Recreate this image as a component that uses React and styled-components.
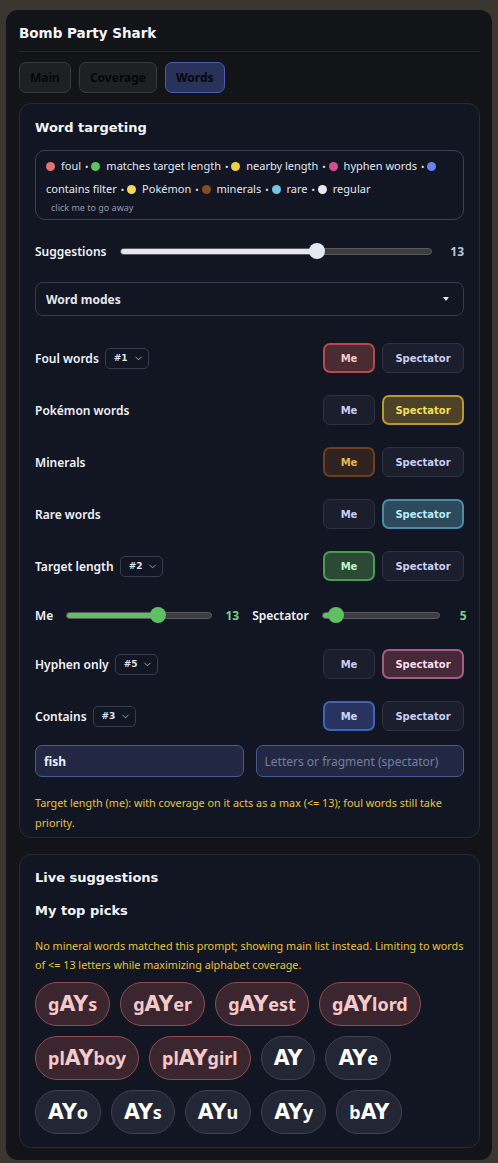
import React from 'react';
import styled, { createGlobalStyle } from 'styled-components';
import { ChevronDown } from 'lucide-react';

const GlobalStyle = createGlobalStyle`
    body {
        margin: 0;
        background: #3b362f;
        font-family: "Noto Sans", "Open Sans", sans-serif;
    }
`;

const HEAD = `"DejaVu Sans", Verdana, sans-serif`;

// Legend entries
const legend = [
    { color: '#e07272', label: 'foul' },
    { color: '#5ec162', label: 'matches target length' },
    { color: '#f0cf45', label: 'nearby length' },
    { color: '#d2508f', label: 'hyphen words' },
    { color: '#6283f0', label: 'contains filter' },
    { color: '#f3da5a', label: 'Pokémon' },
    { color: '#8a4a22', label: 'minerals' },
    { color: '#6ec6e8', label: 'rare' },
    { color: '#e6e9ef', label: 'regular' },
];

// Button tones
const tones = {
    idle: { bg: '#1b1f2d', border: '#2e3344', text: '#c9cdf2' },
    foul: { bg: '#4a2b31', border: '#b24c4a', text: '#f6c9c9' },
    poke: { bg: '#4b4228', border: '#b8982f', text: '#f7df5c' },
    mineral: { bg: '#2f231f', border: '#6d3f20', text: '#eab84c' },
    rare: { bg: '#2c4a5b', border: '#4c8aa8', text: '#bdebf5' },
    target: { bg: '#2b4a36', border: '#4d9a52', text: '#c3f1cb' },
    hyphen: { bg: '#462839', border: '#a35c82', text: '#f6dfea' },
    contains: { bg: '#273461', border: '#4262b2', text: '#cbd6fa' },
};

const modes = [
    { label: 'Foul words', rank: '#1', me: 'foul', spec: 'idle' },
    { label: 'Pokémon words', me: 'idle', spec: 'poke' },
    { label: 'Minerals', me: 'mineral', spec: 'idle' },
    { label: 'Rare words', me: 'idle', spec: 'rare' },
    { label: 'Target length', rank: '#2', me: 'target', spec: 'idle', sliders: true },
    { label: 'Hyphen only', rank: '#5', me: 'idle', spec: 'hyphen' },
    { label: 'Contains', rank: '#3', me: 'contains', spec: 'idle' },
];

const chips = [
    ['g', 'AY', 's', true], ['g', 'AY', 'er', true], ['g', 'AY', 'est', true], ['g', 'AY', 'lord', true],
    ['pl', 'AY', 'boy', true], ['pl', 'AY', 'girl', true], ['', 'AY', '', false], ['', 'AY', 'e', false],
    ['', 'AY', 'o', false], ['', 'AY', 's', false], ['', 'AY', 'u', false], ['', 'AY', 'y', false],
    ['b', 'AY', '', false],
];

const Slider = ({ value, min, max, fill, width }) => {
    const pct = ((value - min) / (max - min)) * 100;
    return (
        <Track style={{ width }}>
            <Fill $color={fill} style={{ width: `${pct}%` }} />
            <Thumb $color={fill} style={{ left: `${pct}%` }} />
        </Track>
    );
};

const App = () => {
    return (
        <>
            <GlobalStyle />
            <Panel>
                <Title>Bomb Party Shark</Title>
                <Divider />
                <Tabs>
                    <Tab>Main</Tab>
                    <Tab>Coverage</Tab>
                    <Tab $active>Words</Tab>
                </Tabs>

                <Card>
                    <CardTitle>Word targeting</CardTitle>
                    <Legend>
                        <LegendLine>
                            {legend.map((item, i) => (
                                <React.Fragment key={item.label}>
                                    <Dot $color={item.color} />
                                    <LegendLabel>{item.label}</LegendLabel>
                                    {i < legend.length - 1 && <Sep>•</Sep>}{' '}
                                </React.Fragment>
                            ))}
                        </LegendLine>
                        <Dismiss>click me to go away</Dismiss>
                    </Legend>

                    <SuggestRow>
                        <Label>Suggestions</Label>
                        <Slider value={13} min={1} max={20} fill="#e3e7f1" width={312} />
                        <Value>13</Value>
                    </SuggestRow>

                    <Select>
                        <span>Word modes</span>
                        <Caret />
                    </Select>

                    <Modes>
                        {modes.map((m) => (
                            <React.Fragment key={m.label}>
                                <ModeRow>
                                    <ModeLeft>
                                        <Label>{m.label}</Label>
                                        {m.rank && (
                                            <Rank>
                                                {m.rank}
                                                <ChevronDown size={11} strokeWidth={1.4} />
                                            </Rank>
                                        )}
                                    </ModeLeft>
                                    <ModeButtons>
                                        <ModeButton $tone={tones[m.me]} $w={52}>Me</ModeButton>
                                        <ModeButton $tone={tones[m.spec]} $w={82}>Spectator</ModeButton>
                                    </ModeButtons>
                                </ModeRow>
                                {m.sliders && (
                                    <LengthRow>
                                        <Label>Me</Label>
                                        <Slider value={13} min={1} max={20} fill="#5fbf63" width={146} />
                                        <GreenValue>13</GreenValue>
                                        <Label>Spectator</Label>
                                        <Slider value={5} min={3} max={20} fill="#5fbf63" width={118} />
                                        <GreenValue>5</GreenValue>
                                    </LengthRow>
                                )}
                            </React.Fragment>
                        ))}
                    </Modes>

                    <Inputs>
                        <Input defaultValue="fish" />
                        <Input placeholder="Letters or fragment (spectator)" />
                    </Inputs>

                    <Note>
                        Target length (me): with coverage on it acts as a max (&lt;= 13); foul words still take priority.
                    </Note>
                </Card>

                <Card $second>
                    <CardTitle>Live suggestions</CardTitle>
                    <SubTitle>My top picks</SubTitle>
                    <Note $tight>
                        No mineral words matched this prompt; showing main list instead. Limiting to words of &lt;= 13 letters while maximizing alphabet coverage.
                    </Note>
                    <Chips>
                        {chips.map(([pre, mid, post, foul], i) => (
                            <Chip key={i} $foul={foul}>
                                {pre}<Hit>{mid}</Hit>{post}
                            </Chip>
                        ))}
                    </Chips>
                </Card>
            </Panel>
        </>
    );
};

const Panel = styled.div`
    margin: 10px 6px 0 6px;
    background: #131418;
    border-radius: 12px;
    padding: 14px 12px 12px 13px;
    min-height: 1123px;
    box-sizing: border-box;
`;

const Title = styled.div`
    font-family: ${HEAD};
    font-weight: 700;
    font-size: 13.5px;
    color: #f4f5f8;
    line-height: 18px;
`;

const Divider = styled.div`
    height: 1px;
    background: #26272d;
    margin: 9px 0 10px 0;
`;

const Tabs = styled.div`
    display: flex;
    gap: 8px;
`;

const Tab = styled.div`
    height: 31px;
    box-sizing: border-box;
    padding: 0 10px;
    display: flex;
    align-items: center;
    border-radius: 7px;
    font-size: 12px;
    font-weight: 700;
    color: #060608;
    background: ${(p) => (p.$active ? '#29325a' : '#1f2024')};
    border: 1px solid ${(p) => (p.$active ? '#4a5bb2' : '#3a3b41')};
`;

const Card = styled.div`
    margin-top: ${(p) => (p.$second ? '16px' : '10px')};
    background: #121623;
    border: 1px solid #262b39;
    border-radius: 12px;
    padding: ${(p) => (p.$second ? '14px 15px 13px 15px' : '15px 15px 4px 15px')};
`;

const CardTitle = styled.div`
    font-family: ${HEAD};
    font-weight: 700;
    font-size: 13px;
    line-height: 18px;
    color: #f4f5f8;
`;

const SubTitle = styled(CardTitle)`
    margin-top: 15px;
`;

const Legend = styled.div`
    margin-top: 13px;
    border: 1px solid #3b4050;
    border-radius: 10px;
    padding: 4px 10px 4px 10px;
`;

const LegendLine = styled.div`
    font-size: 11px;
    line-height: 22px;
    color: #e2e5ee;
`;

const Dot = styled.span`
    display: inline-block;
    width: 9px;
    height: 9px;
    border-radius: 50%;
    background: ${(p) => p.$color};
    vertical-align: -1px;
    margin-right: 6px;
`;

const LegendLabel = styled.span``;

const Sep = styled.span`
    margin-left: 4px;
    font-size: 9px;
`;

const Dismiss = styled.div`
    font-size: 9px;
    line-height: 14px;
    color: #9297a6;
    margin-left: 5px;
`;

const Label = styled.span`
    font-size: 12px;
    font-weight: 600;
    color: #f0f2f7;
    white-space: nowrap;
`;

const SuggestRow = styled.div`
    display: flex;
    align-items: center;
    height: 20px;
    margin-top: 21px;
    gap: 14px;
`;

const Value = styled.span`
    font-size: 12px;
    font-weight: 700;
    color: #bcc3dc;
    margin-left: auto;
`;

const GreenValue = styled.span`
    font-size: 12px;
    font-weight: 700;
    color: #7bcf86;
    min-width: 14px;
    text-align: right;
`;

const Track = styled.div`
    position: relative;
    height: 7px;
    border-radius: 4px;
    background: #3d3d3f;
    border: 1px solid #5a5a5e;
    box-sizing: border-box;
    flex-shrink: 0;
`;

const Fill = styled.div`
    height: 100%;
    border-radius: 4px;
    background: ${(p) => p.$color};
`;

const Thumb = styled.div`
    position: absolute;
    top: 50%;
    width: 16px;
    height: 16px;
    border-radius: 50%;
    background: ${(p) => p.$color};
    transform: translate(-50%, -50%);
`;

const Select = styled.div`
    margin-top: 21px;
    height: 34px;
    box-sizing: border-box;
    border: 1px solid #363b4b;
    border-radius: 8px;
    display: flex;
    align-items: center;
    justify-content: space-between;
    padding: 0 14px 0 10px;
    font-size: 12px;
    font-weight: 700;
    color: #e4e6ee;
`;

const Caret = styled.span`
    width: 0;
    height: 0;
    border-left: 3.5px solid transparent;
    border-right: 3.5px solid transparent;
    border-top: 4px solid #e4e6ee;
`;

const Modes = styled.div`
    display: flex;
    flex-direction: column;
    gap: 22px;
    margin-top: 27px;
`;

const ModeRow = styled.div`
    display: flex;
    align-items: center;
    justify-content: space-between;
    height: 30px;
`;

const ModeLeft = styled.div`
    display: flex;
    align-items: center;
    gap: 6px;
`;

const Rank = styled.div`
    height: 21px;
    box-sizing: border-box;
    border: 1px solid #383d4d;
    border-radius: 5px;
    display: flex;
    align-items: center;
    gap: 5px;
    padding: 0 4px 0 8px;
    font-family: ${HEAD};
    font-size: 9px;
    font-weight: 700;
    color: #dfe2ea;
`;

const ModeButtons = styled.div`
    display: flex;
    gap: 7px;
`;

const ModeButton = styled.div`
    width: ${(p) => p.$w}px;
    height: 30px;
    box-sizing: border-box;
    border-radius: 7px;
    display: flex;
    align-items: center;
    justify-content: center;
    font-family: ${HEAD};
    font-size: 10px;
    font-weight: 700;
    background: ${(p) => p.$tone.bg};
    border: ${(p) => (p.$tone === tones.idle ? 1 : 2)}px solid ${(p) => p.$tone.border};
    color: ${(p) => p.$tone.text};
`;

const LengthRow = styled.div`
    display: flex;
    align-items: center;
    height: 24px;
    gap: 13px;
`;

const Inputs = styled.div`
    display: grid;
    grid-template-columns: 1fr 1fr;
    gap: 12px;
    margin-top: 14px;
`;

const Input = styled.input`
    height: 32px;
    box-sizing: border-box;
    background: #222843;
    border: 1px solid #4a5a8c;
    border-radius: 7px;
    padding: 0 8px;
    font-family: "Noto Sans", sans-serif;
    font-size: 12px;
    font-weight: 700;
    color: #eceff8;
    outline: none;
    min-width: 0;
    &::placeholder {
        color: #767e9c;
        font-weight: 400;
    }
`;

const Note = styled.div`
    margin-top: 16px;
    font-size: 10.8px;
    line-height: ${(p) => (p.$tight ? '19px' : '20px')};
    color: #e6c43f;
`;

const Chips = styled.div`
    display: flex;
    flex-wrap: wrap;
    gap: 10px;
    margin-top: 8px;
`;

const Chip = styled.div`
    height: 44px;
    box-sizing: border-box;
    border-radius: 22px;
    padding: 0 12px;
    display: flex;
    align-items: center;
    font-size: 18px;
    font-weight: 700;
    background: ${(p) => (p.$foul ? '#3b2630' : '#232634')};
    border: 1px solid ${(p) => (p.$foul ? '#8c4a52' : '#3d4151')};
    color: ${(p) => (p.$foul ? '#f3c9c9' : '#ffffff')};
`;

const Hit = styled.span`
    font-family: ${HEAD};
    font-weight: 700;
    font-size: 20.5px;
`;

export default App;
